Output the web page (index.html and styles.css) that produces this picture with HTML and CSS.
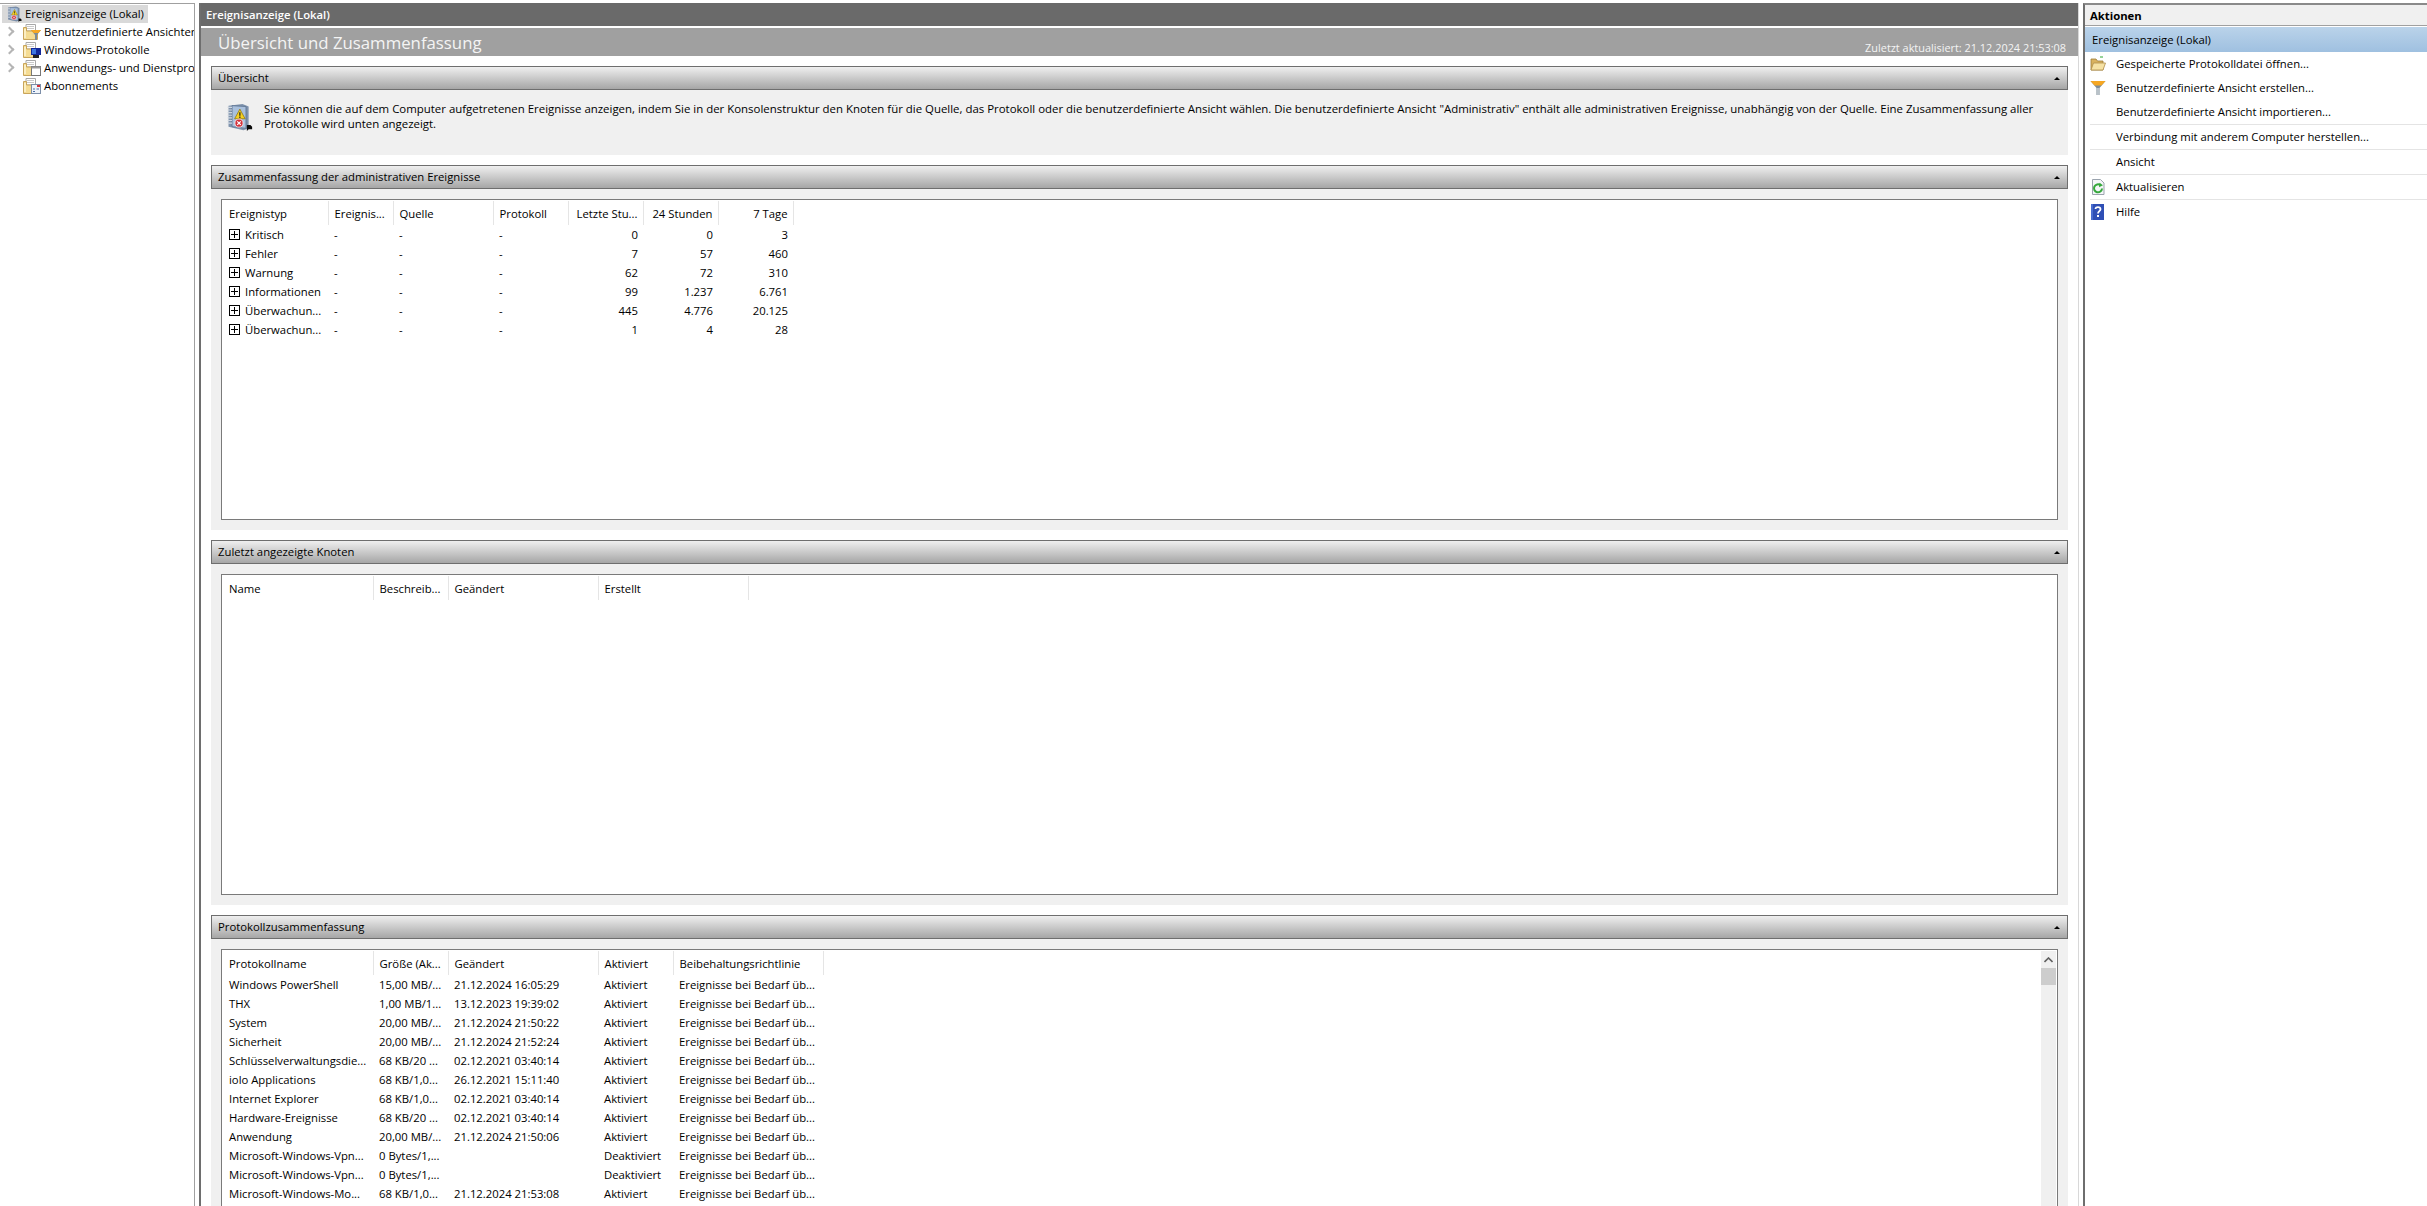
FILE: index.html
```html
<!DOCTYPE html>
<html lang="de">
<head>
    <meta charset="UTF-8">
    <title>Ereignisanzeige</title>
    <link rel="stylesheet" href="styles.css">
</head>
<body>
    <svg class="defs" width="0" height="0">
        <defs>
            <symbol id="i-book" viewBox="0 0 32 32">
                <path d="M4 3 L20 1 L27 4 L27 29 L21 31 L4 27 Z" fill="#7f93ad"/>
                <path d="M8 3 L24 4 L24 29 L8 27 Z" fill="#a9c0dc" stroke="#5e7391" stroke-width="1"/>
                <path d="M3 5 H8 M3 8 H8 M3 11 H8 M3 14 H8 M3 17 H8 M3 20 H8 M3 23 H8" stroke="#cfd6df" stroke-width="1.4"/>
                <path d="M17 7 L23 18 H11 Z" fill="#f5d020" stroke="#8a6d00" stroke-width="0.8"/>
                <path d="M17 10.5 V14.5 M17 15.5 V17" stroke="#222" stroke-width="1.4"/>
                <circle cx="16" cy="23" r="4.6" fill="#d2303a" stroke="#fff" stroke-width="0.8"/>
                <path d="M14 21 L18 25 M18 21 L14 25" stroke="#fff" stroke-width="1.4"/>
                <path d="M25 25 H29 L31 27 V30 H27 L25 32 Z" fill="#0a0a0a"/>
            </symbol>
            <symbol id="i-folder" viewBox="0 0 16 16">
                <path d="M3 0.5 H12.5 V7 H3 Z" fill="#fff" stroke="#a8a8a8"/>
                <path d="M4 2.5 H11 M4 4.5 H11" stroke="#c9c9c9"/>
                <path d="M0.5 3.5 H3.5 V7 H14.5 V15.5 H0.5 Z" fill="#f5dc93" stroke="#c9a55b"/>
                <path d="M1 5 H3 V14 H1 Z" fill="#fbeec2"/>
            </symbol>
            <symbol id="i-funnel" viewBox="0 0 16 16">
                <path d="M0.5 1 H15.5 L9.5 8 V15 H6.5 V8 Z" fill="#7d8b96"/>
                <path d="M0.5 1 H15.5 L11.5 5.5 H4.5 Z" fill="#f6a723"/>
                <path d="M6.5 8 H9.5 V15 H6.5 Z" fill="#b9c2c9"/>
            </symbol>
            <symbol id="i-open" viewBox="0 0 16 16">
                <path d="M1 3 H6 L7.5 5 H13 V14 H1 Z" fill="#d9b25f" stroke="#9d7c39" stroke-width="0.8"/>
                <path d="M3.5 7 H15.5 L13 14 H1 Z" fill="#f6e2a4" stroke="#b08f4b" stroke-width="0.8"/>
                <path d="M10 1 H13" stroke="#53b653" stroke-width="1.2"/>
            </symbol>
            <symbol id="i-refresh" viewBox="0 0 16 16">
                <path d="M2.5 0.5 H10.5 L14 4 V15.5 H2.5 Z" fill="#f4f6f8" stroke="#9aa3ad"/>
                <path d="M12 9.5 A4 4 0 1 1 10.5 6.2" fill="none" stroke="#35a83b" stroke-width="2"/>
                <path d="M9.5 3.8 L13 6.3 L9 8.2 Z" fill="#35a83b"/>
            </symbol>
            <symbol id="i-help" viewBox="0 0 16 16">
                <rect x="1" y="0" width="13" height="16" fill="#2f4fb5"/>
                <rect x="1" y="0" width="2" height="16" fill="#4a6ed0"/>
                <path d="M5.5 5 C5.5 2.5 10.5 2.5 10.5 5.2 C10.5 7.2 8 7.2 8 9.6" fill="none" stroke="#fff" stroke-width="1.8"/>
                <rect x="7" y="11" width="2" height="2" fill="#fff"/>
            </symbol>
        </defs>
    </svg>

    <div class="app">
        <!-- Konsolenstruktur -->
        <nav class="tree">
            <div class="tree-row tree-root">
                <svg class="icon root-icon"><use href="#i-book"/></svg>
                <span class="root-label">Ereignisanzeige (Lokal)</span>
            </div>
            <div class="tree-row">
                <span class="chevron"></span>
                <span class="folder">
                    <svg class="icon"><use href="#i-folder"/></svg>
                    <svg class="overlay" viewBox="0 0 10 10"><path d="M0 0 H10 L6 5 V10 H4 V5 Z" fill="#7d8b96"/><path d="M0 0 H10 L7.5 3 H2.5 Z" fill="#f6a723"/></svg>
                </span>
                <span>Benutzerdefinierte Ansichten</span>
            </div>
            <div class="tree-row">
                <span class="chevron"></span>
                <span class="folder">
                    <svg class="icon"><use href="#i-folder"/></svg>
                    <svg class="overlay" viewBox="0 0 10 10"><rect x="0" y="0" width="10" height="7" fill="#13299a"/><rect x="1" y="1" width="4" height="5" fill="#3f78e0"/><rect x="2" y="7" width="6" height="3" fill="#222"/></svg>
                </span>
                <span>Windows-Protokolle</span>
            </div>
            <div class="tree-row">
                <span class="chevron"></span>
                <span class="folder">
                    <svg class="icon"><use href="#i-folder"/></svg>
                    <svg class="overlay" viewBox="0 0 10 10"><rect x="0.5" y="0.5" width="9" height="9" fill="#fff" stroke="#777"/><rect x="0.5" y="0.5" width="9" height="2" fill="#9a9a9a"/></svg>
                </span>
                <span>Anwendungs- und Dienstprotokolle</span>
            </div>
            <div class="tree-row">
                <span class="chevron-space"></span>
                <span class="folder">
                    <svg class="icon"><use href="#i-folder"/></svg>
                    <svg class="overlay" viewBox="0 0 10 10"><rect x="0.5" y="0.5" width="9" height="9" fill="#eef3fa" stroke="#7c8ea8"/><path d="M2 5 H4 M5.5 5 H8 M2 7.5 H4" stroke="#4a6ea8"/><rect x="6" y="1" width="3" height="2" fill="#d2303a"/></svg>
                </span>
                <span>Abonnements</span>
            </div>
        </nav>

        <main class="main">
            <div class="main-title">Ereignisanzeige (Lokal)</div>
            <div class="band">
                <span class="band-title">Übersicht und Zusammenfassung</span>
                <span class="band-time">Zuletzt aktualisiert: 21.12.2024 21:53:08</span>
            </div>

            <div class="content">
                <section class="section">
                    <div class="section-head">Übersicht<span class="collapse"></span></div>
                    <div class="section-body overview">
                        <svg class="overview-icon"><use href="#i-book"/></svg>
                        <p>Sie können die auf dem Computer aufgetretenen Ereignisse anzeigen, indem Sie in der Konsolenstruktur den Knoten für die Quelle, das Protokoll oder die benutzerdefinierte Ansicht wählen. Die benutzerdefinierte Ansicht "Administrativ" enthält alle administrativen Ereignisse, unabhängig von der Quelle. Eine Zusammenfassung aller<br>Protokolle wird unten angezeigt.</p>
                    </div>
                </section>

                <section class="section">
                    <div class="section-head">Zusammenfassung der administrativen Ereignisse<span class="collapse"></span></div>
                    <div class="section-body">
                        <div class="listbox">
                            <table class="grid">
                                <colgroup>
                                    <col class="w105"><col class="w65"><col class="w100"><col class="w75"><col class="w75"><col class="w75"><col class="w75">
                                </colgroup>
                                <thead>
                                    <tr><th>Ereignistyp</th><th>Ereignis...</th><th>Quelle</th><th>Protokoll</th><th class="num">Letzte Stu...</th><th class="num">24 Stunden</th><th class="num">7 Tage</th></tr>
                                </thead>
                                <tbody>
                                    <tr><td class="expand"><span class="plus"></span>Kritisch</td><td>-</td><td>-</td><td>-</td><td class="num">0</td><td class="num">0</td><td class="num">3</td></tr>
                                    <tr><td class="expand"><span class="plus"></span>Fehler</td><td>-</td><td>-</td><td>-</td><td class="num">7</td><td class="num">57</td><td class="num">460</td></tr>
                                    <tr><td class="expand"><span class="plus"></span>Warnung</td><td>-</td><td>-</td><td>-</td><td class="num">62</td><td class="num">72</td><td class="num">310</td></tr>
                                    <tr><td class="expand"><span class="plus"></span>Informationen</td><td>-</td><td>-</td><td>-</td><td class="num">99</td><td class="num">1.237</td><td class="num">6.761</td></tr>
                                    <tr><td class="expand"><span class="plus"></span>Überwachun...</td><td>-</td><td>-</td><td>-</td><td class="num">445</td><td class="num">4.776</td><td class="num">20.125</td></tr>
                                    <tr><td class="expand"><span class="plus"></span>Überwachun...</td><td>-</td><td>-</td><td>-</td><td class="num">1</td><td class="num">4</td><td class="num">28</td></tr>
                                </tbody>
                            </table>
                        </div>
                    </div>
                </section>

                <section class="section">
                    <div class="section-head">Zuletzt angezeigte Knoten<span class="collapse"></span></div>
                    <div class="section-body">
                        <div class="listbox">
                            <table class="grid">
                                <colgroup>
                                    <col class="w150"><col class="w75"><col class="w150"><col class="w150">
                                </colgroup>
                                <thead>
                                    <tr><th>Name</th><th>Beschreib...</th><th>Geändert</th><th>Erstellt</th></tr>
                                </thead>
                            </table>
                        </div>
                    </div>
                </section>

                <section class="section">
                    <div class="section-head">Protokollzusammenfassung<span class="collapse"></span></div>
                    <div class="section-body">
                        <div class="listbox listbox-open">
                            <table class="grid">
                                <colgroup>
                                    <col class="w150"><col class="w75"><col class="w150"><col class="w75"><col class="w150">
                                </colgroup>
                                <thead>
                                    <tr><th>Protokollname</th><th>Größe (Ak...</th><th>Geändert</th><th>Aktiviert</th><th>Beibehaltungsrichtlinie</th></tr>
                                </thead>
                                <tbody>
                                    <tr><td>Windows PowerShell</td><td>15,00 MB/...</td><td>21.12.2024 16:05:29</td><td>Aktiviert</td><td>Ereignisse bei Bedarf üb...</td></tr>
                                    <tr><td>THX</td><td>1,00 MB/1...</td><td>13.12.2023 19:39:02</td><td>Aktiviert</td><td>Ereignisse bei Bedarf üb...</td></tr>
                                    <tr><td>System</td><td>20,00 MB/...</td><td>21.12.2024 21:50:22</td><td>Aktiviert</td><td>Ereignisse bei Bedarf üb...</td></tr>
                                    <tr><td>Sicherheit</td><td>20,00 MB/...</td><td>21.12.2024 21:52:24</td><td>Aktiviert</td><td>Ereignisse bei Bedarf üb...</td></tr>
                                    <tr><td>Schlüsselverwaltungsdie...</td><td>68 KB/20 ...</td><td>02.12.2021 03:40:14</td><td>Aktiviert</td><td>Ereignisse bei Bedarf üb...</td></tr>
                                    <tr><td>iolo Applications</td><td>68 KB/1,0...</td><td>26.12.2021 15:11:40</td><td>Aktiviert</td><td>Ereignisse bei Bedarf üb...</td></tr>
                                    <tr><td>Internet Explorer</td><td>68 KB/1,0...</td><td>02.12.2021 03:40:14</td><td>Aktiviert</td><td>Ereignisse bei Bedarf üb...</td></tr>
                                    <tr><td>Hardware-Ereignisse</td><td>68 KB/20 ...</td><td>02.12.2021 03:40:14</td><td>Aktiviert</td><td>Ereignisse bei Bedarf üb...</td></tr>
                                    <tr><td>Anwendung</td><td>20,00 MB/...</td><td>21.12.2024 21:50:06</td><td>Aktiviert</td><td>Ereignisse bei Bedarf üb...</td></tr>
                                    <tr><td>Microsoft-Windows-Vpn...</td><td>0 Bytes/1,...</td><td></td><td>Deaktiviert</td><td>Ereignisse bei Bedarf üb...</td></tr>
                                    <tr><td>Microsoft-Windows-Vpn...</td><td>0 Bytes/1,...</td><td></td><td>Deaktiviert</td><td>Ereignisse bei Bedarf üb...</td></tr>
                                    <tr><td>Microsoft-Windows-Mo...</td><td>68 KB/1,0...</td><td>21.12.2024 21:53:08</td><td>Aktiviert</td><td>Ereignisse bei Bedarf üb...</td></tr>
                                </tbody>
                            </table>
                            <div class="scrollbar">
                                <svg class="scroll-up" viewBox="0 0 9 6"><path d="M0.5 5 L4.5 1 L8.5 5" fill="none" stroke="#606060" stroke-width="1.6"/></svg>
                                <div class="scroll-thumb"></div>
                            </div>
                        </div>
                    </div>
                </section>
            </div>
        </main>

        <aside class="actions">
            <div class="actions-title">Aktionen</div>
            <div class="actions-group">Ereignisanzeige (Lokal)</div>
            <ul class="action-list">
                <li><svg class="icon"><use href="#i-open"/></svg>Gespeicherte Protokolldatei öffnen...</li>
                <li><svg class="icon"><use href="#i-funnel"/></svg>Benutzerdefinierte Ansicht erstellen...</li>
                <li>Benutzerdefinierte Ansicht importieren...</li>
                <li class="sep">Verbindung mit anderem Computer herstellen...</li>
                <li class="sep">Ansicht</li>
                <li class="sep"><svg class="icon"><use href="#i-refresh"/></svg>Aktualisieren</li>
                <li class="sep"><svg class="icon"><use href="#i-help"/></svg>Hilfe</li>
            </ul>
        </aside>
    </div>
</body>
</html>
```

FILE: styles.css
```css
html, body {
    margin: 0;
    padding: 0;
    height: 100%;
    overflow: hidden;
}

body {
    background-color: #fff;
    color: #000;
    font-family: "Open Sans", "Noto Sans", sans-serif;
    font-size: 11.3px;
}

.defs {
    position: absolute;
}

.app {
    display: flex;
    height: 1203px;
    padding-top: 3px;
}

.icon {
    width: 16px;
    height: 16px;
    flex: none;
}

/* tree */
.tree {
    width: 195px;
    flex: none;
    box-sizing: border-box;
    border-top: 1px solid #a0a0a0;
    border-right: 1px solid #a0a0a0;
    overflow: hidden;
    white-space: nowrap;
}

.tree-row {
    display: flex;
    align-items: center;
    height: 18px;
}

.tree-row > span:last-child {
    padding-bottom: 2px;
}

.tree-root {
    width: 146px;
    margin-top: 1px;
    margin-left: 2px;
    background-color: #d9d9d9;
}

.root-icon {
    margin-left: 4px;
}

.root-label {
    margin-left: 3px;
}

.chevron, .chevron-space {
    width: 23px;
    flex: none;
    position: relative;
    height: 18px;
}

.chevron::before {
    content: "";
    position: absolute;
    left: 6px;
    top: 5px;
    width: 5px;
    height: 5px;
    border-top: 2px solid #b5b5b5;
    border-right: 2px solid #b5b5b5;
    transform: rotate(45deg);
}

.folder {
    position: relative;
    display: flex;
    width: 21px;
    height: 16px;
    flex: none;
}

.overlay {
    position: absolute;
    left: 8px;
    top: 6px;
    width: 10px;
    height: 10px;
}

/* center pane */
.main {
    width: 1877px;
    flex: none;
    margin-left: 4px;
    border-left: 2px solid #6e6e6e;
    border-right: 1px solid #d8d8d8;
    overflow: hidden;
}

.main-title {
    height: 23px;
    line-height: 23px;
    padding-left: 5px;
    background-color: #6a6a6a;
    color: #fff;
    font-weight: 600;
}

.band {
    display: flex;
    justify-content: space-between;
    align-items: flex-end;
    height: 28px;
    margin-top: 2px;
    padding: 0 12px 0 17px;
    background-color: #a0a0a0;
    color: #f4f4f4;
}

.band-title {
    font-size: 16.8px;
    line-height: 27px;
}

.band-time {
    font-size: 10.9px;
    line-height: 17px;
}

.content {
    padding: 10px 10px 0;
}

.section {
    margin-bottom: 10px;
}

.section-head {
    position: relative;
    box-sizing: border-box;
    height: 24px;
    line-height: 22px;
    padding-left: 6px;
    border: 1px solid #6e6e6e;
    background: linear-gradient(#efefef, #a6a6a6);
}

.collapse {
    position: absolute;
    right: 7px;
    top: 10px;
    border-left: 3px solid transparent;
    border-right: 3px solid transparent;
    border-bottom: 3px solid #000;
}

.section-body {
    padding: 10px;
    background-color: #f0f0f0;
}

.overview {
    display: flex;
    height: 65px;
    box-sizing: border-box;
    padding: 11px 14px;
}

.overview-icon {
    width: 28px;
    height: 30px;
    flex: none;
    margin-top: 1px;
    margin-right: 11px;
}

.overview p {
    margin: 0;
    font-size: 11.43px;
    line-height: 15px;
}

/* list boxes */
.listbox {
    position: relative;
    box-sizing: border-box;
    height: 321px;
    padding: 1px;
    border: 1px solid #7a7a7a;
    background-color: #fff;
    overflow: hidden;
}

.listbox-open {
    height: 300px;
}

.grid {
    table-layout: fixed;
    width: 0;
    border-collapse: collapse;
    white-space: nowrap;
}

.w65 { width: 65px; }
.w75 { width: 75px; }
.w100 { width: 100px; }
.w105 { width: 105px; }
.w150 { width: 150px; }

.grid th {
    height: 24px;
    padding: 0 5px 0 6px;
    border-right: 1px solid #e5e5e5;
    font-weight: 400;
    text-align: left;
    overflow: hidden;
}

.grid td {
    height: 19px;
    padding: 0 5px 0 6px;
    overflow: hidden;
}

.grid th.num, .grid td.num {
    text-align: right;
}

.plus {
    display: inline-block;
    position: relative;
    width: 9px;
    height: 9px;
    margin-right: 5px;
    vertical-align: -1px;
    border: 1px solid #000;
    background:
        linear-gradient(#000, #000) center / 7px 1px no-repeat,
        linear-gradient(#000, #000) center / 1px 7px no-repeat;
}

.scrollbar {
    position: absolute;
    top: 1px;
    right: 1px;
    bottom: 0;
    width: 15px;
    background-color: #f0f0f0;
}

.scroll-up {
    display: block;
    width: 9px;
    height: 6px;
    margin: 6px 3px 5px;
}

.scroll-thumb {
    height: 17px;
    background-color: #cdcdcd;
}

/* actions pane */
.actions {
    flex: 1;
    margin-left: 4px;
    border-left: 2px solid #6e6e6e;
    border-top: 2px solid #8a8a8a;
    white-space: nowrap;
}

.actions-title {
    height: 20px;
    line-height: 22px;
    padding-left: 5px;
    background-color: #f0f0f0;
    border-bottom: 1px solid #a0a0a0;
    font-weight: 700;
}

.actions-group {
    height: 25px;
    line-height: 25px;
    margin-top: 1px;
    padding-left: 7px;
    background: linear-gradient(#bad3ea, #9fc0e0);
}

.action-list {
    list-style: none;
    margin: 0;
    padding: 0 0 0 5px;
}

.action-list li {
    display: flex;
    align-items: center;
    box-sizing: border-box;
    height: 24px;
    padding-left: 26px;
    padding-bottom: 2px;
    position: relative;
}

.action-list li.sep {
    height: 25px;
    border-top: 1px solid #e4e4e4;
}

.action-list .icon {
    position: absolute;
    left: 0;
    top: 4px;
}
```
